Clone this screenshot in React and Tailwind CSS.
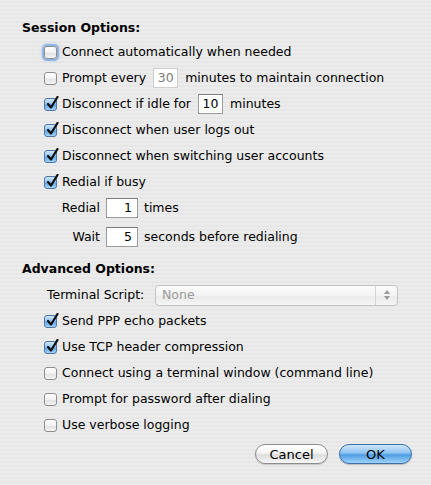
import React from 'react';

const Checkbox = ({ checked, focused }) => (
  <span
    className={`relative inline-block w-[13px] h-[13px] shrink-0 rounded-[3px] border ${
      checked
        ? 'border-[#4f77a6] bg-[linear-gradient(180deg,#cfe6fb_0%,#94c5f1_45%,#5fa6e8_55%,#a3d3fb_100%)]'
        : 'border-[#8e8e8e] bg-[linear-gradient(180deg,#ffffff_0%,#f1f1f1_50%,#e2e2e2_55%,#f4f4f4_100%)]'
    } ${focused ? 'shadow-[0_0_0_2px_rgba(110,160,225,0.55),0_0_3px_2px_rgba(110,160,225,0.5)]' : ''}`}
  >
    {checked && (
      <svg className="absolute left-[1px] top-[-3px]" width="13" height="14" viewBox="0 0 13 14">
        <path d="M2 8 L5 11.5 L11.5 1" fill="none" stroke="#111" strokeWidth="2.3" strokeLinecap="round" strokeLinejoin="round" />
      </svg>
    )}
  </span>
);

const Field = ({ value, width, disabled, right }) => (
  <span
    className={`inline-flex items-center h-[20px] bg-white border px-[5px] ${width} ${
      right ? 'justify-end' : 'justify-center'
    } ${disabled ? 'border-[#cfcfcf] text-[#7a7a7a]' : 'border-[#9b9b9b] border-t-[#7e7e7e] text-black'}`}
  >
    {value}
  </span>
);

const CheckRow = ({ checked, focused, children }) => (
  <div className="flex items-center h-[26px] pl-[22px] gap-[5px]">
    <Checkbox checked={checked} focused={focused} />
    <div className="flex items-center gap-[7px]">{children}</div>
  </div>
);

export default function App() {
  return (
    <div
      className="w-[431px] h-[485px] overflow-hidden text-[12.5px] leading-4 text-black bg-[#ebebeb] bg-[repeating-linear-gradient(0deg,#ececec_0px,#ececec_2px,#e7e7e7_2px,#e7e7e7_4px)] pl-[22px] pt-[20px]"
      style={{ fontFamily: '"DejaVu Sans", "Liberation Sans", sans-serif' }}
    >
      <div className="font-bold h-4">Session Options:</div>
      <div className="mt-[3px]">
        <CheckRow focused>Connect automatically when needed</CheckRow>
        <CheckRow>
          <span>Prompt every</span>
          <Field value="30" width="w-[25px]" disabled />
          <span>minutes to maintain connection</span>
        </CheckRow>
        <CheckRow checked>
          <span>Disconnect if idle for</span>
          <Field value="10" width="w-[25px]" />
          <span>minutes</span>
        </CheckRow>
        <CheckRow checked>Disconnect when user logs out</CheckRow>
        <CheckRow checked>Disconnect when switching user accounts</CheckRow>
        <CheckRow checked>Redial if busy</CheckRow>
        <div className="flex items-center h-[26px] gap-[6px]">
          <span className="w-[78px] text-right">Redial</span>
          <Field value="1" width="w-[32px]" right />
          <span>times</span>
        </div>
        <div className="flex items-center h-[26px] mt-[3px] gap-[6px]">
          <span className="w-[78px] text-right">Wait</span>
          <Field value="5" width="w-[32px]" right />
          <span>seconds before redialing</span>
        </div>
      </div>

      <div className="font-bold h-4 mt-[11px]">Advanced Options:</div>
      <div className="mt-[5px]">
        <div className="flex items-center h-[26px] pl-[25px] gap-[8px]">
          <span className="w-[100px]">Terminal Script:</span>
          <div className="flex items-center h-[21px] w-[243px] rounded-[4px] border border-[#c4c4c4] bg-[linear-gradient(180deg,#fbfbfb_0%,#f3f3f3_50%,#ebebeb_55%,#f5f5f5_100%)]">
            <span className="flex-1 pl-[6px] text-[#9a9a9a]">None</span>
            <span className="flex flex-col items-center justify-center w-[22px] h-full border-l border-[#d4d4d4] gap-[2px]">
              <svg width="6" height="4" viewBox="0 0 6 4"><path d="M3 0 L6 4 L0 4 Z" fill="#9a9a9a" /></svg>
              <svg width="6" height="4" viewBox="0 0 6 4"><path d="M0 0 L6 0 L3 4 Z" fill="#9a9a9a" /></svg>
            </span>
          </div>
        </div>
        <CheckRow checked>Send PPP echo packets</CheckRow>
        <CheckRow checked>Use TCP header compression</CheckRow>
        <CheckRow>Connect using a terminal window (command line)</CheckRow>
        <CheckRow>Prompt for password after dialing</CheckRow>
        <CheckRow>Use verbose logging</CheckRow>
      </div>

      <div className="flex justify-end gap-[11px] pr-[19px] mt-[6px]">
        <button className="w-[73px] h-[20px] rounded-full border border-[#8c8c8c] bg-[linear-gradient(180deg,#ffffff_0%,#f4f4f4_45%,#dcdcdc_55%,#f7f7f7_100%)] text-[13px] leading-none shadow-[0_1px_1px_rgba(0,0,0,0.15)]">
          Cancel
        </button>
        <button className="w-[73px] h-[20px] rounded-full border border-[#3d6ea8] bg-[linear-gradient(180deg,#cfe7fb_0%,#8cc2f0_45%,#4e9de4_55%,#9fd3fb_100%)] text-[13px] leading-none shadow-[0_1px_1px_rgba(0,0,0,0.2)]">
          OK
        </button>
      </div>
    </div>
  );
}
